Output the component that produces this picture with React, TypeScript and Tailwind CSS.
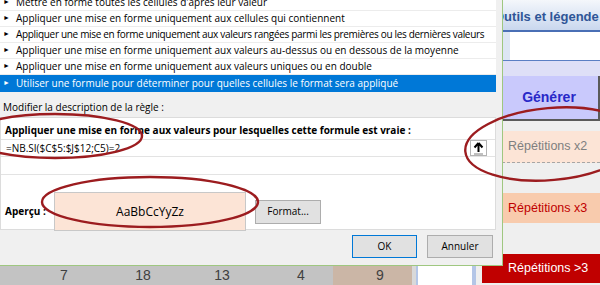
const rules = [
  { text: "Mettre en forme toutes les cellules d'après leur valeur", tight: false },
  { text: "Appliquer une mise en forme uniquement aux cellules qui contiennent", tight: false },
  {
    text: "Appliquer une mise en forme uniquement aux valeurs rangées parmi les premières ou les dernières valeurs",
    tight: true,
  },
  { text: "Appliquer une mise en forme uniquement aux valeurs au-dessus ou en dessous de la moyenne", tight: false },
  { text: "Appliquer une mise en forme uniquement aux valeurs uniques ou en double", tight: false },
];

const cells = ["7", "18", "13", "4"];

function RefButton() {
  return (
    <div className="flex h-[16px] w-[17px] shrink-0 items-center justify-center border border-[#b4b4b4] bg-white">
      <svg width="11" height="13" viewBox="0 0 11 13">
        <path d="M5.5 1 L1.5 5.5 M5.5 1 L9.5 5.5 M5.5 1 V10" stroke="#000" strokeWidth="2" fill="none" />
        <path d="M1 12 H10" stroke="#808080" strokeWidth="1" />
      </svg>
    </div>
  );
}

function Sheet() {
  return (
    <div className="flex h-full w-full font-['Liberation_Sans',sans-serif]">
      <div className="flex flex-1 flex-col justify-end">
        <div className="flex h-[20px] border-t border-dotted border-[#8a8a8a] text-[14px] text-[#404040]">
          <div className="w-[17px] bg-[#c3c3c3]" />
          {cells.map((c) => (
            <div key={c} className="flex w-[79px] items-center justify-center bg-[#c3c3c3] pl-[15px]">
              {c}
            </div>
          ))}
          <div className="flex w-[79px] items-center justify-center bg-[#cbb6a6] pl-[15px]">9</div>
          <div className="w-[4px] bg-[#d9d9d9]" />
          <div className="flex-1 border-l-2 border-[#b4c6e7] bg-white" />
        </div>
      </div>
      <div className="flex w-[128px] flex-col border-l-4 border-[#b4c6e7] bg-[#efefef]">
        <div className="h-[32px] overflow-hidden whitespace-nowrap border-b-2 border-[#4a6fb5] bg-[linear-gradient(180deg,#f4f7fb_0%,#c9d7ee_100%)] pl-[18px] pt-[7px] text-[13px] font-bold text-[#2f5597]">
          Outils et légende
        </div>
        <div className="flex h-[29px] border-b border-[#5b7fc4]">
          <div className="w-[34px] bg-[#dde6f4]" />
          <div className="flex-1 bg-white" />
        </div>
        <div className="h-[15px] bg-[#dedff7]" />
        <div className="flex h-[45px] items-center justify-center border-r-2 border-b-2 border-[#5a5a5a] bg-[#c9c9fc] pl-[24px] text-[14px] font-bold text-[#2828c8]">
          Générer
        </div>
        <div className="h-[10px]" />
        <div className="ml-[6px] flex h-[32px] items-center border-b border-dashed border-[#a6a6a6] bg-[#fce4d6] pl-[26px] text-[12.5px] text-[#7f7f7f]">
          Répétitions x2
        </div>
        <div className="h-[30px]" />
        <div className="ml-[6px] flex h-[30px] items-center bg-[#f8cbad] pl-[26px] text-[12.5px] text-[#c00000]">
          Répétitions x3
        </div>
        <div className="h-[31px]" />
        <div className="ml-[6px] flex h-[29px] items-center bg-[#c00000] pl-[26px] text-[12.5px] text-white">
          Répétitions &gt;3
        </div>
      </div>
    </div>
  );
}

function Dialog() {
  return (
    <div className="absolute left-0 top-0 flex h-[266px] w-[503px] flex-col border-b border-r border-[#9fc780] bg-[#f0f0f0] font-['Open_Sans',sans-serif] text-[10px] text-black">
      <div className="mr-[6px] mt-[-5px] overflow-hidden bg-white">
        {rules.map((r) => (
          <div
            key={r.text}
            className={
              r.tight
                ? "flex h-[16px] items-center overflow-hidden whitespace-nowrap border-b border-[#ececec] tracking-[-0.32px]"
                : "flex h-[16px] items-center overflow-hidden whitespace-nowrap border-b border-[#ececec]"
            }
          >
            <span className="w-[16px] shrink-0 pl-[3px] text-[7px]">►</span>
            <span>{r.text}</span>
          </div>
        ))}
        <div className="flex h-[17px] items-center overflow-hidden whitespace-nowrap bg-[#0078d7] text-white">
          <span className="w-[16px] shrink-0 pl-[3px] text-[7px]">►</span>
          <span>Utiliser une formule pour déterminer pour quelles cellules le format sera appliqué</span>
        </div>
      </div>
      <div className="pl-[3px] pt-[8px]">Modifier la description de la règle :</div>
      <div className="mr-[6px] mt-[2px] flex h-[113px] flex-col border border-[#dcdcdc] bg-white">
        <div className="pl-[4px] pt-[5px] font-bold">
          Appliquer une mise en forme aux valeurs pour lesquelles cette formule est vraie :
        </div>
        <div className="mt-[1px] flex h-[18px] items-center justify-between border-y border-[#e3e3e3] pl-[5px] pr-[8px]">
          <span className="pt-[1px]">=NB.SI($C$5:$J$12;C5)=2</span>
          <RefButton />
        </div>
        <div className="mt-[17px] border-t border-[#e3e3e3]" />
        <div className="mt-[17px] flex items-center">
          <div className="w-[53px] pl-[4px] font-bold">Aperçu :</div>
          <div className="flex h-[39px] w-[192px] items-center justify-center border border-[#c8c8c8] bg-[#fce4d6] text-[12px]">
            AaBbCcYyZz
          </div>
          <div className="ml-[9px] flex h-[24px] w-[66px] items-center justify-center border border-[#adadad] bg-[#e1e1e1]">
            Format...
          </div>
        </div>
      </div>
      <div className="mr-[9px] mt-[5px] flex justify-end gap-[10px]">
        <div className="flex h-[23px] w-[65px] items-center justify-center border border-[#0078d7] bg-[#e1e1e1]">
          OK
        </div>
        <div className="flex h-[23px] w-[66px] items-center justify-center border border-[#adadad] bg-[#e1e1e1]">
          Annuler
        </div>
      </div>
    </div>
  );
}

function Marks() {
  return (
    <svg className="pointer-events-none absolute inset-0" width="600" height="285" viewBox="0 0 600 285">
      <g fill="none" stroke="#9c1c1f" strokeWidth="2.4">
        <ellipse cx="55" cy="136" rx="87" ry="22" />
        <ellipse cx="150" cy="202" rx="108" ry="25" />
        <ellipse cx="551" cy="144" rx="86" ry="36" transform="rotate(-5 551 144)" />
      </g>
    </svg>
  );
}

export default function App() {
  return (
    <div className="relative h-[285px] w-[600px] overflow-hidden bg-[#efefef]">
      <Sheet />
      <Dialog />
      <Marks />
    </div>
  );
}
